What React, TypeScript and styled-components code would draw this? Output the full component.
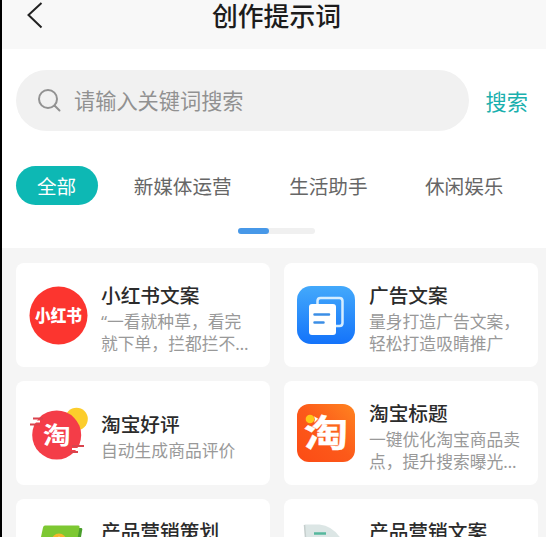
import React from "react";
import styled, { createGlobalStyle } from "styled-components";

const Global = createGlobalStyle`
  * { box-sizing: border-box; }
  html, body { margin: 0; height: 100%; overflow: hidden; background: #fff; }
  body { font-family: "Noto Sans CJK SC", sans-serif; }
  button, input { font-family: inherit; border: 0; padding: 0; background: none; }
  svg { display: block; flex: none; overflow: visible; }
`;

const Page = styled.div`
  height: 537px;
  width: 546px;
  overflow: hidden;
  display: flex;
  flex-direction: column;
  border-left: 2px solid #000;
  background: #f5f5f5;
`;

const Header = styled.header`
  flex: none;
  height: 49px;
  display: grid;
  grid-template-columns: 60px 1fr 55px;
  background: #f8f8f8;
`;

const BackButton = styled.button`
  padding: 2px 0 0 24px;
  display: flex;
  align-items: flex-start;
`;

const Title = styled.h1`
  margin: 0;
  height: 29px;
  display: flex;
  align-items: center;
  justify-content: center;
  font-size: 25.8px;
  font-weight: 500;
  line-height: 29px;
  white-space: nowrap;
  color: #1c1c1c;
`;

const Controls = styled.section`
  flex: none;
  height: 199px;
  background: #fff;
  padding: 21px 18px 0 14px;
  display: flex;
  flex-direction: column;
`;

const SearchRow = styled.div`
  display: flex;
  align-items: center;
  gap: 17px;
`;

const SearchBox = styled.label`
  width: 453px;
  height: 61px;
  border-radius: 31px;
  background: #f1f1f1;
  display: flex;
  align-items: center;
  padding-left: 21px;
  gap: 12px;
`;

const SearchInput = styled.input`
  flex: 1;
  min-width: 0;
  height: 34px;
  margin-bottom: 2px;
  font-size: 21.2px;
  outline: 0;
  &::placeholder { color: #919191; opacity: 1; }
`;

const SearchButton = styled.button`
  font-size: 21.2px;
  line-height: 32px;
  white-space: nowrap;
  color: #1ab0ae;
`;

const Tabs = styled.nav`
  margin-top: 35px;
  display: flex;
  gap: 14.5px;
`;

const Tab = styled.button<{ $active?: boolean }>`
  height: 39px;
  padding: 0 22px 0 21px;
  border-radius: 20px;
  font-size: 19.6px;
  line-height: 39px;
  white-space: nowrap;
  color: ${(p) => (p.$active ? "#fff" : "#666")};
  background: ${(p) => (p.$active ? "#0db8b4" : "transparent")};
`;

const Track = styled.div`
  margin: 23px 0 0 222px;
  width: 77px;
  height: 6px;
  border-radius: 3px;
  background: #f0f0f0;
`;

const Thumb = styled.div`
  width: 31px;
  height: 6px;
  border-radius: 3px;
  background: #4798e8;
`;

const Cards = styled.main`
  padding: 15px 8px 0 14px;
  display: grid;
  grid-template-columns: 254px 254px;
  grid-auto-rows: 104px;
  gap: 14px;
`;

const Card = styled.article`
  display: flex;
  align-items: center;
  gap: 13px;
  padding-left: 12px;
  border-radius: 8px;
  background: #fff;
`;

const CardText = styled.div`
  padding-top: 5.5px;
`;

const CardTitle = styled.h2`
  margin: 0;
  font-size: 19.7px;
  font-weight: 500;
  line-height: 29px;
  color: #2b2b2b;
`;

const Description = styled.p`
  margin: 1.5px 0 0;
  font-family: "Noto Sans", "Noto Sans CJK SC", sans-serif;
  font-size: 16.8px;
  line-height: 22.4px;
  color: #999;
  white-space: pre;
`;

const RedBook = () => (
  <svg width="60" height="60" viewBox="0 0 60 60">
    <circle cx="30.500" cy="30.500" r="29" fill="#fc352f" />
    <text x="30.500" y="37" textAnchor="middle" fontSize="16.5" fontWeight="900" fill="#fff" textLength="47" lengthAdjust="spacingAndGlyphs">小红书</text>
  </svg>
);

const Documents = () => (
  <svg width="60" height="60" viewBox="0 0 60 60">
    <defs>
      <linearGradient id="blue" x1="0" y1="0" x2="0" y2="1">
        <stop stopColor="#43a9fb" />
        <stop offset="1" stopColor="#1473fa" />
      </linearGradient>
    </defs>
    <rect x="1" y="1" width="58" height="58" rx="14" fill="url(#blue)" />
    <path d="M21.500 20V16q0-3 3-3h19q3 0 3 3v22q0 3-3 3h-4" fill="none" stroke="#d5edff" strokeWidth="2.5" />
    <rect x="13" y="19" width="27" height="31" rx="3" fill="#fff" />
    <path d="M18.500 29.500h14.500M18.500 37.500h9" stroke="#3b8ee6" strokeWidth="2.5" strokeLinecap="round" />
  </svg>
);

const Review = () => (
  <svg width="60" height="60" viewBox="0 0 60 60">
    <circle cx="48.500" cy="16" r="11.3" fill="#fccd2c" />
    <circle cx="28.700" cy="32" r="24.500" fill="#f43d48" />
    <path d="M5 15.500h10M2 21.500h10" stroke="#d9434d" strokeWidth="2" />
    <path d="M4 18.500h8" stroke="#fff" strokeWidth="2" />
    <path d="M44 43h12M42 49h8" stroke="#d9434d" strokeWidth="2" />
    <path d="M44 46h10" stroke="#fff" strokeWidth="2" />
    <text transform="translate(28.700 40.700) scale(1.15 1)" textAnchor="middle" fontSize="24" fontWeight="700" fill="#fff">淘</text>
  </svg>
);

const Taobao = () => (
  <svg width="60" height="60" viewBox="0 0 60 60">
    <defs>
      <linearGradient id="orange" x1="1" y1="0" x2="0" y2="1">
        <stop stopColor="#ff8420" />
        <stop offset="0.5" stopColor="#fc5a1a" />
        <stop offset="1" stopColor="#fc4b15" />
      </linearGradient>
    </defs>
    <rect x="1" y="1" width="58" height="58" rx="12" fill="url(#orange)" />
    <text transform="translate(30 44) scale(1.2 1)" textAnchor="middle" fontSize="37" fontWeight="700" fill="#fff" stroke="#fff" strokeWidth="0.4">淘</text>
    <circle cx="13.500" cy="16.500" r="5.300" fill="#fc5c1b" />
    <circle cx="14" cy="16" r="4.300" fill="#ffc817" />
  </svg>
);

const Plan = () => (
  <svg width="60" height="60" viewBox="0 0 60 60">
    <path d="M17 7h36q2 0 1 3l-8 48H5Z" fill="#4a9e2c" />
    <path d="M17 4.500h33q2 0 1.500 2L43 54H5L15 6.500q.5-2 2-2Z" fill="#7dc832" />
    <circle cx="31" cy="20" r="7.500" fill="#f5b52e" />
    <path d="m31 15 2 4h4l-4 3-2 4-2-4-4-3h4Z" fill="#fff1b8" />
  </svg>
);

const Sheet = () => (
  <svg width="60" height="60" viewBox="0 0 60 60">
    <path d="M8.500 3.500h15q19 2 28 28v28H14Z" fill="#dce6e5" />
    <path d="M8.500 4 13 59" stroke="#c5cecd" strokeWidth="1.500" />
    <path d="M18 12.500h12" stroke="#56b79d" strokeWidth="2.500" />
  </svg>
);

const prompts = [
  { title: "小红书文案", text: "“一看就种草，看完\n就下单，拦都拦不…", Icon: RedBook },
  { title: "广告文案", text: "量身打造广告文案，\n轻松打造吸睛推广", Icon: Documents },
  { title: "淘宝好评", text: "自动生成商品评价", Icon: Review },
  { title: "淘宝标题", text: "一键优化淘宝商品卖\n点，提升搜索曝光…", Icon: Taobao },
  { title: "产品营销策划", text: "制定产品营销方案，\n提升产品知名度", Icon: Plan },
  { title: "产品营销文案", text: "快速生成产品文案，\n突出产品卖点", Icon: Sheet },
];

export default function App() {
  return (
    <Page>
      <Global />
      <Header>
        <BackButton aria-label="返回">
          <svg width="18" height="28" viewBox="0 0 18 28" fill="none" stroke="#222" strokeWidth="2">
            <path d="M15.500 1 2.500 13 15.500 25.500" />
          </svg>
        </BackButton>
        <Title>创作提示词</Title>
      </Header>
      <Controls>
        <SearchRow>
          <SearchBox>
            <svg width="25" height="25" viewBox="0 0 25 25" fill="none" stroke="#929292" strokeWidth="2">
              <circle cx="11" cy="11" r="9" />
              <path d="m17.500 17.500 5 5" strokeLinecap="round" />
            </svg>
            <SearchInput placeholder="请输入关键词搜索" />
          </SearchBox>
          <SearchButton>搜索</SearchButton>
        </SearchRow>
        <Tabs>
          <Tab $active>全部</Tab>
          <Tab>新媒体运营</Tab>
          <Tab>生活助手</Tab>
          <Tab>休闲娱乐</Tab>
        </Tabs>
        <Track><Thumb /></Track>
      </Controls>
      <Cards>
        {prompts.map(({ title, text, Icon }) => (
          <Card key={title}>
            <Icon />
            <CardText>
              <CardTitle>{title}</CardTitle>
              <Description>{text}</Description>
            </CardText>
          </Card>
        ))}
      </Cards>
    </Page>
  );
}
